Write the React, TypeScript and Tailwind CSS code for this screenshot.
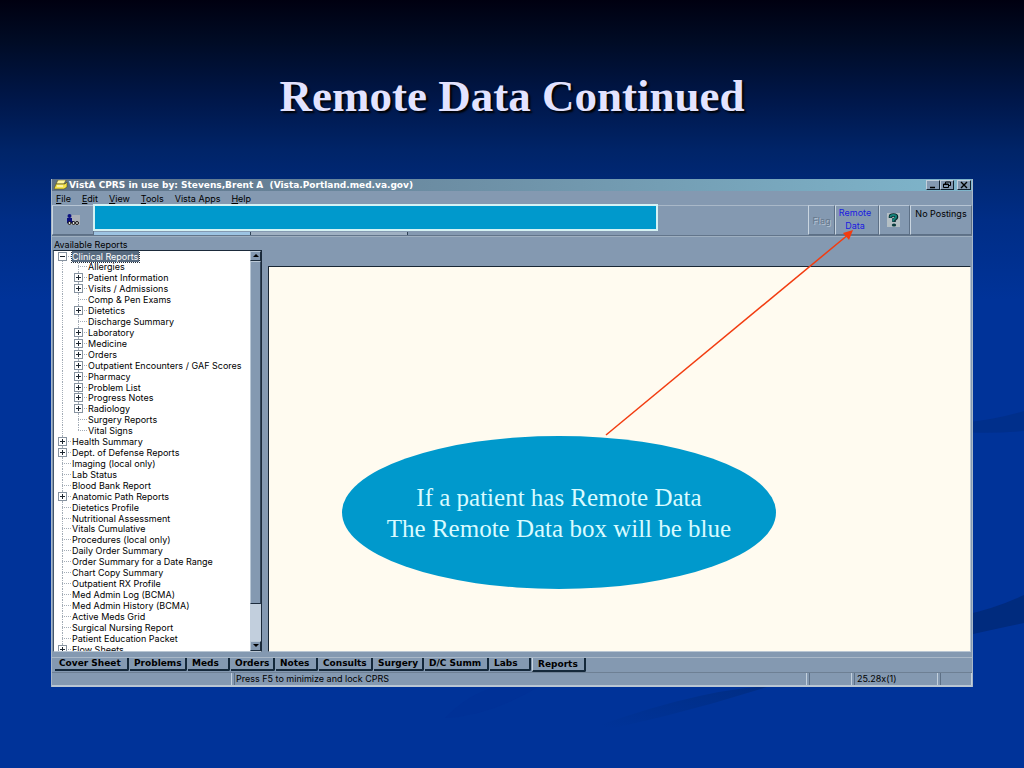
import type { ReactNode } from "react";

type Report = { name: string; child?: boolean; open?: boolean; more?: boolean; last?: boolean };

const reports: Report[] = [
  { name: "Clinical Reports", open: true },
  { name: "Allergies", child: true },
  { name: "Patient Information", child: true, more: true },
  { name: "Visits / Admissions", child: true, more: true },
  { name: "Comp & Pen Exams", child: true },
  { name: "Dietetics", child: true, more: true },
  { name: "Discharge Summary", child: true },
  { name: "Laboratory", child: true, more: true },
  { name: "Medicine", child: true, more: true },
  { name: "Orders", child: true, more: true },
  { name: "Outpatient Encounters / GAF Scores", child: true, more: true },
  { name: "Pharmacy", child: true, more: true },
  { name: "Problem List", child: true, more: true },
  { name: "Progress Notes", child: true, more: true },
  { name: "Radiology", child: true, more: true },
  { name: "Surgery Reports", child: true },
  { name: "Vital Signs", child: true, last: true },
  { name: "Health Summary", more: true },
  { name: "Dept. of Defense Reports", more: true },
  { name: "Imaging (local only)" },
  { name: "Lab Status" },
  { name: "Blood Bank Report" },
  { name: "Anatomic Path Reports", more: true },
  { name: "Dietetics Profile" },
  { name: "Nutritional Assessment" },
  { name: "Vitals Cumulative" },
  { name: "Procedures (local only)" },
  { name: "Daily Order Summary" },
  { name: "Order Summary for a Date Range" },
  { name: "Chart Copy Summary" },
  { name: "Outpatient RX Profile" },
  { name: "Med Admin Log (BCMA)" },
  { name: "Med Admin History (BCMA)" },
  { name: "Active Meds Grid" },
  { name: "Surgical Nursing Report" },
  { name: "Patient Education Packet" },
  { name: "Flow Sheets", more: true },
];

const tabs = [
  { name: "Cover Sheet", width: "w-[74px]" },
  { name: "Problems", width: "w-[57px]" },
  { name: "Meds", width: "w-[42px]" },
  { name: "Orders", width: "w-[44px]" },
  { name: "Notes", width: "w-[42px]" },
  { name: "Consults", width: "w-[54px]" },
  { name: "Surgery", width: "w-[50px]" },
  { name: "D/C Summ", width: "w-[64px]" },
  { name: "Labs", width: "w-[41px]" },
];

const menus = [
  ["F", "ile"],
  ["E", "dit"],
  ["V", "iew"],
  ["T", "ools"],
  ["", "Vista Apps"],
  ["H", "elp"],
];

function Branch({ open, more, first, last }: { open?: boolean; more?: boolean; first?: boolean; last?: boolean }) {
  const box = open || more;
  return (
    <svg className="h-[11px] w-[14px] shrink-0" viewBox="0 0 14 11" shapeRendering="crispEdges" aria-hidden="true">
      <path
        d={`M4.5 ${first ? 5 : 0}V${last ? 6 : 11}M4 5.5H13`}
        fill="none"
        stroke="#a3acb6"
        strokeDasharray="1 1"
      />
      {box && (
        <>
          <rect x="0.5" y="1.5" width="8" height="8" fill="#fff" stroke="#8793a0" />
          <path d={more ? "M2 5.5H7M4.5 3V8" : "M2 5.5H7"} stroke="#1c2630" />
        </>
      )}
    </svg>
  );
}

function Background() {
  return (
    <svg
      className="pointer-events-none absolute inset-0 h-full w-full"
      viewBox="0 0 1024 768"
      preserveAspectRatio="none"
      aria-hidden="true"
    >
      <defs>
        <linearGradient id="fade" x1="1" x2="0" y1="0" y2="1">
          <stop offset="0" stopColor="#002d84" />
          <stop offset="0.8" stopColor="#003399" />
        </linearGradient>
      </defs>
      <path d="M960 423Q995 420 1024 411V431Q990 434 960 432Z" fill="#002f8b" />
      <path d="M960 616Q995 609 1024 595V623Q995 629 960 637Z" fill="#002b7e" />
      <path d="M770 686Q690 690 565 738Q670 718 770 686Z" fill="url(#fade)" />
      <path d="M500 686Q470 692 445 718Q490 716 540 686Z" fill="#003197" />
    </svg>
  );
}

function WindowButton({ label, children }: { label: string; children: ReactNode }) {
  return (
    <button
      aria-label={label}
      className="flex h-[10px] w-[14px] items-center justify-center border border-t-[#c3d0dc] border-r-[#10202e] border-b-[#10202e] border-l-[#c3d0dc] bg-[#8499b1]"
    >
      <svg viewBox="0 0 10 8" className="h-[8px] w-[10px]" fill="none" stroke="#000" aria-hidden="true">
        {children}
      </svg>
    </button>
  );
}

function Arrow({ down }: { down?: boolean }) {
  return (
    <button
      aria-label={down ? "Scroll down" : "Scroll up"}
      className="flex h-[10px] w-full items-center justify-center border border-t-[#bac8d6] border-r-[#1c2c3c] border-b-[#1c2c3c] border-l-[#bac8d6] bg-[#8499b1]"
    >
      <svg viewBox="0 0 6 4" className="h-[4px] w-[6px]" aria-hidden="true">
        <path d={down ? "M0 0H6L3 3Z" : "M0 3H6L3 0Z"} />
      </svg>
    </button>
  );
}

const toolButton =
  "flex shrink-0 border border-t-[#b7c5d4] border-r-[#5d7086] border-b-[#5d7086] border-l-[#c9d5e0]";

export default function App() {
  return (
    <main className="relative min-h-screen bg-[linear-gradient(#000010_0px,#000b24_40px,#00174a_100px,#002468_150px,#002d86_220px,#003399_300px)] pb-20 font-['Inter','Liberation_Sans',sans-serif] text-[9px] leading-[11px] text-black">
      <Background />
      <h1 className="relative pt-[71px] text-center font-['Liberation_Serif',serif] text-[45px] leading-[50px] font-bold text-[#e3e3ff] [text-shadow:2px_2px_2px_#000]">
        Remote Data Continued
      </h1>

      <section className="relative mx-[51px] mt-[58px] flex flex-col border-x border-[#a9b8c8] bg-[#8499b1]">
        <header className="flex h-[12px] items-center bg-linear-to-r from-[#5e7187] to-[#7fb6cc] pr-px pl-[2px] font-['DejaVu_Sans',sans-serif] text-[9px] font-bold text-white">
          <svg viewBox="0 0 14 10" className="mr-px h-[10px] w-[14px]" aria-hidden="true">
            <path d="M4 0H12L10 4H2Z" fill="#fff7a0" stroke="#554d10" strokeWidth=".6" />
            <path d="M2 4H11L13 2V7L10 9H0Z" fill="#f4e34c" stroke="#554d10" strokeWidth=".6" />
            <path d="M3 6H9" stroke="#fff" />
          </svg>
          <span className="flex-1 whitespace-pre">VistA CPRS in use by: Stevens,Brent A  (Vista.Portland.med.va.gov)</span>
          <WindowButton label="Minimize">
            <path d="M2 6.5H7" strokeWidth="1.5" />
          </WindowButton>
          <WindowButton label="Restore">
            <path d="M3.5 3V1H8.5V4.5H7M1.5 3H6.5V6.5H1.5ZM1.5 3.5H6.5" />
          </WindowButton>
          <span className="w-[3px]" />
          <WindowButton label="Close">
            <path d="M2 1L8 7M8 1L2 7" strokeWidth="1.4" />
          </WindowButton>
        </header>

        <nav className="flex h-[14px] items-center gap-[11px] pl-[4px]">
          {menus.map(([key, rest]) => (
            <button key={rest}>
              <span className="underline">{key}</span>
              {rest}
            </button>
          ))}
        </nav>

        <div className="flex h-[31px] border-b border-[#62758b]">
          <button aria-label="Patient" className={`${toolButton} w-[42px] items-center justify-center`}>
            <svg viewBox="0 0 14 12" className="h-[12px] w-[14px]" aria-hidden="true">
              <path d="M2 1H14V11H2Z" fill="#aab0b8" />
              <circle cx="3.5" cy="2" r="2" fill="#0a1080" />
              <path d="M1 4H6V7H8V9H1Z" fill="#0a1080" />
              <circle cx="3.5" cy="9" r="1.5" fill="#ddd" stroke="#111" />
              <circle cx="7.5" cy="9" r="1.5" fill="#ddd" stroke="#111" />
              <circle cx="11" cy="9" r="1.5" fill="#ddd" stroke="#111" />
            </svg>
          </button>
          <div className="flex min-w-0 flex-1 items-end border-t border-[#a9b8c8]">
            <div className="h-[3px] w-[157px] border-r border-[#304558] bg-[#9cc3e2]" />
            <div className="h-[3px] w-[157px] border-r border-[#304558] bg-[#9fb0c2]" />
          </div>
          <button className={`${toolButton} w-[27px] items-center justify-center text-[#66788c] [text-shadow:1px_1px_0_#b5c3d2]`}>
            Flag
          </button>
          <button className={`${toolButton} w-[44px] justify-center pr-[4px] leading-[13px] text-[#1a1ae0]`}>
            Remote
            <br />
            Data
          </button>
          <button aria-label="Help" className={`${toolButton} w-[31px] items-center justify-center pr-[3px]`}>
            <svg viewBox="0 0 13 14" className="h-[14px] w-[13px]" aria-hidden="true">
              <path d="M0 0H13V14H0Z" fill="#b4bfc4" />
              <path d="M3.500 5V3.500Q3.500 2 6.500 2T9.500 4Q9.500 5.500 7 6.500V9" fill="none" stroke="#08252a" strokeWidth="3.500" />
              <path d="M3.500 4.500V3.500Q3.500 2 6.500 2T9 4Q9 5.500 6.500 6.500V8.500" fill="none" stroke="#138078" strokeWidth="2" />
              <ellipse cx="7" cy="12" rx="2.200" ry="1.500" fill="#0a3c3e" />
            </svg>
          </button>
          <button className={`${toolButton} w-[62px] justify-center pt-[2px] whitespace-nowrap`}>No Postings</button>
        </div>

        <div className="flex h-[416px] gap-[6px] border-t border-[#9eafc0] px-px">
          <div className="flex w-[209px] shrink-0 flex-col">
            <h2 className="h-[13px] pt-[2px] pl-px">Available Reports</h2>
            <div className="flex min-h-0 flex-1 border border-t-[#1b2a3a] border-r-[#1b2a3a] border-b-[#b9c6d3] border-l-[#44566a] bg-white">
              <ul role="tree" aria-label="Available Reports" className="min-w-0 flex-1 overflow-hidden pl-[4px]">
                {reports.map((r, i) => (
                  <li
                    key={r.name}
                    role="treeitem"
                    aria-level={r.child ? 2 : 1}
                    aria-selected={i === 0}
                    className="flex h-[11px] items-center whitespace-nowrap [&:nth-child(12n+1)]:h-[10px]"
                  >
                    {r.child && (
                      <svg className="h-[11px] w-[16px] shrink-0" shapeRendering="crispEdges" aria-hidden="true">
                        <path d="M4.5 0V11" stroke="#a3acb6" strokeDasharray="1 1" />
                      </svg>
                    )}
                    <Branch open={r.open} more={r.more} first={i === 0} last={r.last} />
                    <span className={i === 0 ? "bg-[#586b80] pr-px text-white outline-1 outline-dotted outline-[#26313d]" : ""}>
                      {r.name}
                    </span>
                  </li>
                ))}
              </ul>
              <div className="flex w-[11px] flex-col bg-[#c2cfdd]">
                <Arrow />
                <div className="h-[343px] border border-t-[#bac8d6] border-r-[#33465a] border-b-[#1c2c3c] border-l-[#bac8d6] bg-[#8499b1]" />
                <div className="flex-1" />
                <Arrow down />
              </div>
            </div>
          </div>
          <div className="mt-[29px] min-w-0 flex-1 border border-t-[#182634] border-r-[#b9c6d3] border-b-[#b9c6d3] border-l-[#182634] bg-[#fffbf0]" />
        </div>

        <div role="tablist" className="mt-[5px] flex h-[15px] gap-px border-t border-[#a9b8c8] pl-[3px] font-['DejaVu_Sans',sans-serif] font-bold">
          {tabs.map((t) => (
            <button
              key={t.name}
              role="tab"
              aria-selected={false}
              className={`${t.width} h-[13px] shrink-0 rounded-br-[2px] border-r-2 border-b-2 border-[#14283a] pl-[4px] text-left whitespace-nowrap`}
            >
              {t.name}
            </button>
          ))}
          <button
            role="tab"
            aria-selected={true}
            className="h-[14px] w-[54px] shrink-0 rounded-br-[2px] border-r-2 border-b-2 border-l border-r-[#14283a] border-b-[#14283a] border-l-[#c9d5e0] pl-[5px] text-left whitespace-nowrap"
          >
            Reports
          </button>
        </div>

        <footer className="flex h-[13px] gap-[2px] border-t border-[#6e8094]">
          <span className="w-[180px] border-r border-[#c3d0dc]" />
          <span className="flex-1 border-r border-l border-r-[#c3d0dc] border-l-[#5d7086] pl-px">
            Press F5 to minimize and lock CPRS
          </span>
          <span className="w-[43px] border-r border-l border-r-[#c3d0dc] border-l-[#5d7086]" />
          <span className="w-[84px] border-r border-l border-r-[#c3d0dc] border-l-[#5d7086] pl-[2px]">25.28x(1)</span>
          <span className="w-[32px] border-r border-l border-r-[#c3d0dc] border-l-[#5d7086]" />
        </footer>
        <div className="h-[2px] bg-[#b9c6d3]" />

        <div className="absolute top-[25px] left-[41px] h-[27px] w-[565px] border-2 border-[#d5f2f4] bg-[#0099cc]" />
        <svg className="absolute top-[49px] right-[116px] h-[210px] w-[252px]" viewBox="0 0 252 210" aria-hidden="true">
          <path d="M2 207L245 6" stroke="#f23c10" strokeWidth="1.500" />
          <path d="M249 2L245 12L239 5Z" fill="#f23c10" />
        </svg>
        <div className="absolute top-[257px] right-[196px] flex h-[153px] w-[434px] items-center justify-center rounded-[50%] bg-[#0099cc] text-center font-['Liberation_Serif',serif] text-[25px] leading-[31px] text-[#d9fbff]">
          If a patient has Remote Data
          <br />
          The Remote Data box will be blue
        </div>
      </section>
    </main>
  );
}
